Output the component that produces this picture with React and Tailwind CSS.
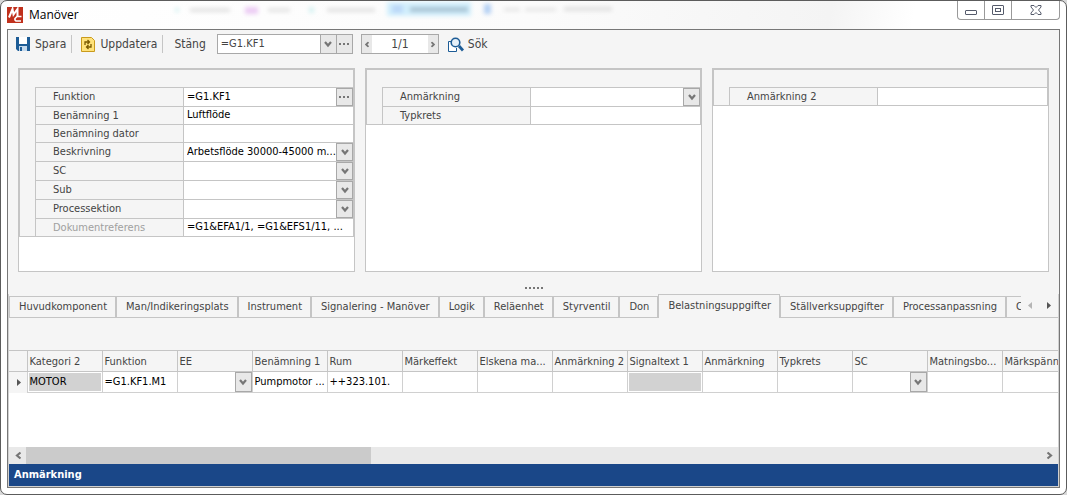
const FONT = "font-['DejaVu_Sans_Condensed','DejaVu_Sans',sans-serif]"

const panels = [
  {
    id: 'main',
    rows: [
      { label: 'Funktion', value: '=G1.KF1', control: 'more' },
      { label: 'Benämning 1', value: 'Luftflöde' },
      { label: 'Benämning dator', value: '' },
      { label: 'Beskrivning', value: 'Arbetsflöde 30000-45000 m...', control: 'select' },
      { label: 'SC', value: '', control: 'select' },
      { label: 'Sub', value: '', control: 'select' },
      { label: 'Processektion', value: '', control: 'select' },
      { label: 'Dokumentreferens', value: '=G1&EFA1/1, =G1&EFS1/11, ...', muted: true },
    ],
  },
  {
    id: 'note',
    rows: [
      { label: 'Anmärkning', value: '', control: 'select' },
      { label: 'Typkrets', value: '' },
    ],
  },
  { id: 'note2', rows: [{ label: 'Anmärkning 2', value: '' }] },
]

const tabs = [
  'Huvudkomponent',
  'Man/Indikeringsplats',
  'Instrument',
  'Signalering - Manöver',
  'Logik',
  'Reläenhet',
  'Styrventil',
  'Don',
  'Belastningsuppgifter',
  'Ställverksuppgifter',
  'Processanpassning',
  'C',
]

const columns = [
  { title: 'Kategori 2', value: 'MOTOR', locked: true },
  { title: 'Funktion', value: '=G1.KF1.M1' },
  { title: 'EE', select: true },
  { title: 'Benämning 1', value: 'Pumpmotor ...' },
  { title: 'Rum', value: '++323.101.' },
  { title: 'Märkeffekt' },
  { title: 'Elskena ma...' },
  { title: 'Anmärkning 2' },
  { title: 'Signaltext 1', locked: true },
  { title: 'Anmärkning' },
  { title: 'Typkrets' },
  { title: 'SC', select: true },
  { title: 'Matningsbo...' },
  { title: 'Märkspänni' },
]

function Chevron({ className = '' }) {
  return (
    <svg width="8" height="7" viewBox="0 0 8 7" className={className} aria-hidden="true">
      <path d="M1 1 4 4.5 7 1" fill="none" stroke="#767676" strokeWidth="2.2" />
    </svg>
  )
}

function SmallChevron({ className = '' }) {
  return (
    <svg width="6" height="5" viewBox="0 0 6 5" className={className} aria-hidden="true">
      <path d="M.7 1 3 3.4 5.300 1" fill="none" stroke="#767676" strokeWidth="1.8" />
    </svg>
  )
}

function Dots() {
  return (
    <svg width="11" height="2" viewBox="0 0 11 2" aria-hidden="true">
      <path d="M0 0h2v2H0zM4 0h2v2H4zM8 0h2v2H8z" fill="#767676" />
    </svg>
  )
}

function SelectBox({ id, label, value = '', className = '' }) {
  return (
    <div className="relative flex h-full w-full min-w-0">
      <select
        id={id}
        aria-label={label}
        defaultValue={value}
        className={`h-full w-full appearance-none truncate bg-white pr-4 outline-none ${className}`}
      >
        <option value={value}>{value}</option>
      </select>
      <span className="pointer-events-none absolute inset-y-0 right-0 flex w-[17px] items-center justify-center border border-[#a8a8a8] bg-[#e8e8e8]">
        <Chevron />
      </span>
    </div>
  )
}

function PropertyRow({ panelId, row }) {
  const id = `${panelId}-${row.label}`
  return (
    <div className={`flex border-t border-l border-[#c5c5c5] ${row.control ? 'h-[19px]' : 'h-[18px]'}`}>
      <label
        htmlFor={id}
        className={`w-[148px] shrink-0 border-r border-[#c5c5c5] pl-[17px] leading-[18px] ${row.muted ? 'text-[#a0a0a0]' : 'text-[#444]'}`}
      >
        {row.label}
      </label>
      {row.control === 'select' ? (
        <SelectBox id={id} value={row.value} className="pl-[3px] text-black" />
      ) : (
        <input id={id} defaultValue={row.value} className="w-full min-w-0 bg-white pl-[3px] text-black outline-none" />
      )}
      {row.control === 'more' && (
        <button aria-label="Välj funktion" className="flex w-[17px] shrink-0 items-center justify-center border border-[#a8a8a8] bg-[#e8e8e8]">
          <Dots />
        </button>
      )}
    </div>
  )
}

function Panel({ panel }) {
  return (
    <section className="h-[204px] border border-[#c5c5c5] bg-white">
      <div className="border border-[#c5c5c5] bg-[#f5f5f5] pt-[17px] pl-[15px]">
        {panel.rows.map((row) => (
          <PropertyRow key={row.label} panelId={panel.id} row={row} />
        ))}
      </div>
    </section>
  )
}

// Blurred shapes of the window behind, seen through the glass title bar
function GlassBackdrop() {
  return (
    <svg className="pointer-events-none absolute top-0 left-0" width="720" height="28" aria-hidden="true">
      <defs>
        <filter id="glass" x="-20%" y="-100%" width="140%" height="300%">
          <feGaussianBlur stdDeviation="2" />
        </filter>
      </defs>
      <g filter="url(#glass)">
        <rect x="168" y="7" width="4" height="4" fill="#d5f2f2" />
        <rect x="183" y="7" width="40" height="4" fill="#e2e2e2" />
        <rect x="238" y="6" width="13" height="7" fill="#ecccf4" />
        <rect x="261" y="7" width="22" height="4" fill="#e4e4e4" />
        <rect x="302" y="6" width="5" height="6" fill="#d5f2f2" />
        <rect x="320" y="7" width="48" height="4" fill="#e2e2e2" />
        <rect x="380" y="1" width="84" height="14" fill="#d2effd" />
        <rect x="385" y="4" width="11" height="8" fill="#bcd8f8" />
        <rect x="403" y="6" width="58" height="5" fill="#a8c3d3" />
        <rect x="477" y="3" width="7" height="10" fill="#b4d0f4" />
        <rect x="497" y="7" width="16" height="3" fill="#e2e2e2" />
        <rect x="518" y="7" width="31" height="3" fill="#e2e2e2" />
        <rect x="557" y="6" width="48" height="4" fill="#e0e0e0" />
      </g>
    </svg>
  )
}

function TitleBar() {
  return (
    <header className="relative flex h-[28px] shrink-0 justify-between bg-[linear-gradient(100deg,#fff_0%,#fbfbfb_50%,#f4f4f4_78%,#fff_86%)]">
      <GlassBackdrop />
      <div className="flex items-center gap-[6px]">
        <svg width="16" height="16" viewBox="0 0 16 16" aria-hidden="true">
          <rect width="16" height="16" fill="#c0301c" />
          <path d="M2 10.500 5.500 2 6.500 7.500 10.500 2v7.500" fill="none" stroke="#fff" strokeWidth="2" />
          <path d="M14.500 9.500H10L8 11.500V13l1 1h5" fill="none" stroke="#fff" strokeWidth="1.700" />
        </svg>
        <h1 className="font-['Open_Sans',sans-serif] text-[12px] text-black">Manöver</h1>
      </div>
      <div className="flex h-[19px] overflow-hidden rounded-b-[4px] border border-t-0 border-[#999] bg-white">
        <button aria-label="Minimera" className="flex w-[27px] items-center justify-center border-r border-[#999]">
          <svg width="12" height="12" viewBox="0 0 12 12">
            <rect x="0.500" y="6.500" width="11" height="4" rx="0.500" fill="#fff" stroke="#555b6b" />
          </svg>
        </button>
        <button aria-label="Maximera" className="flex w-[27px] items-center justify-center border-r border-[#999]">
          <svg width="12" height="10" viewBox="0 0 12 10">
            <rect x="0.500" y="0.500" width="11" height="9" rx="0.500" fill="#fff" stroke="#555b6b" />
            <rect x="3.500" y="3.500" width="5" height="3" fill="#fff" stroke="#555b6b" />
          </svg>
        </button>
        <button aria-label="Stäng fönster" className="flex w-[47px] items-center justify-center">
          <svg width="12" height="10" viewBox="0 0 12 10">
            <path
              d="M1 .5h3L6 2.500 8 .5h3v1.500L8.500 5 11 8v1.500H8L6 7.500 4 9.500H1V8l2.500-3L1 2z"
              fill="#fff"
              stroke="#555b6b"
            />
          </svg>
        </button>
      </div>
    </header>
  )
}

function Toolbar() {
  return (
    <div className="flex h-[28px] shrink-0 items-center pl-2 text-[12px] text-[#444]">
      <button className="flex items-center gap-[5px]">
        <svg width="14" height="14" viewBox="0 0 14 14" aria-hidden="true">
          <path d="M0 0h14v14H2L0 12z" fill="#1d5c96" />
          <path d="M3 0h8v7H3z" fill="#fff" />
          <path d="M3 9h8v5H3z" fill="#c5d9ec" />
          <path d="M4 10h2v4H4z" fill="#1d5c96" />
        </svg>
        Spara
      </button>
      <span className="mr-[9px] ml-[5px] h-[18px] w-px bg-[#c5c5c5]" />
      <button className="flex items-center gap-[5px]">
        <svg width="14" height="15" viewBox="0 0 14 15" aria-hidden="true">
          <path d="M.5.500h10l3 3v11H.5z" fill="#ffe27a" stroke="#c99a1c" />
          <path d="M4 8V5h4M6.500 3 8.500 5l-2 2M10 7v3H6M7.500 8l-2 2 2 2" fill="none" stroke="#7a5a00" strokeWidth="1.300" />
        </svg>
        Uppdatera
      </button>
      <span className="mr-[9px] ml-[5px] h-[18px] w-px bg-[#c5c5c5]" />
      <button className="px-[2px]">Stäng</button>
      <div className="ml-[9px] flex h-5 w-[136px] border border-[#a8a8a8] bg-white text-[11px]">
        <input aria-label="Objekt" defaultValue="=G1.KF1" className="w-full min-w-0 pl-[3px] outline-none" />
        <button aria-label="Visa lista" className="flex w-4 shrink-0 items-center justify-center border-l border-[#a8a8a8] bg-[#e8e8e8]">
          <Chevron />
        </button>
        <button aria-label="Bläddra" className="flex w-4 shrink-0 items-center justify-center border-l border-[#a8a8a8] bg-[#e8e8e8]">
          <Dots />
        </button>
      </div>
      <div className="ml-2 flex h-5 w-[78px] border border-[#a8a8a8] bg-white text-[11px]">
        <button aria-label="Föregående" className="flex w-[10px] shrink-0 items-center justify-center bg-[#e8e8e8]">
          <SmallChevron className="rotate-90" />
        </button>
        <input aria-label="Sida" defaultValue="1/1" className="w-full min-w-0 text-center text-[12px] outline-none" />
        <button aria-label="Nästa" className="flex w-[10px] shrink-0 items-center justify-center bg-[#e8e8e8]">
          <SmallChevron className="-rotate-90" />
        </button>
      </div>
      <button className="ml-[9px] flex items-center gap-1">
        <svg width="16" height="15" viewBox="0 0 16 15" aria-hidden="true">
          <path d="M3 4.500H.5v10h8V11" fill="#fff" stroke="#1d5c96" />
          <circle cx="7.500" cy="5.500" r="4.300" fill="#e6f0f8" stroke="#1d5c96" strokeWidth="1.600" />
          <path d="m11 9 4 4.500" stroke="#1d5c96" strokeWidth="2.800" />
        </svg>
        Sök
      </button>
    </div>
  )
}

function TabStrip() {
  return (
    <div className="flex h-6 shrink-0 text-[#444]">
      <div role="tablist" className="flex min-w-0 flex-1 overflow-hidden">
        {tabs.map((tab) =>
          tab === 'Belastningsuppgifter' ? (
            <button
              key={tab}
              role="tab"
              aria-selected="true"
              className="shrink-0 border border-b-0 border-[#c5c5c5] pr-2 pl-[9px] whitespace-nowrap"
            >
              {tab}
            </button>
          ) : (
            <button
              key={tab}
              role="tab"
              aria-selected="false"
              className="mt-[2px] shrink-0 border border-[#c5c5c5] pr-2 pl-[9px] whitespace-nowrap"
            >
              {tab}
            </button>
          ),
        )}
      </div>
      <div className="flex w-[37px] shrink-0 items-center justify-between border-b border-[#c5c5c5] px-[7px]">
        <button aria-label="Föregående flik">
          <svg width="4" height="7" viewBox="0 0 4 7">
            <path d="M4 0v7L0 3.500z" fill="#b5b5b5" />
          </svg>
        </button>
        <button aria-label="Nästa flik">
          <svg width="4" height="7" viewBox="0 0 4 7">
            <path d="M0 0v7l4-3.500z" fill="#555" />
          </svg>
        </button>
      </div>
    </div>
  )
}

function DataGrid() {
  return (
    <div className="flex-1 overflow-hidden bg-white">
      <div className="h-8 bg-[#f5f5f5]" />
      <table className="w-[1068px] table-fixed border-collapse">
        <thead>
          <tr className="h-[21px] bg-[#f5f5f5]">
            <th className="w-[18px] border border-l-0 border-[#c5c5c5]" />
            {columns.map((col) => (
              <th
                key={col.title}
                scope="col"
                className="w-[75px] overflow-hidden border border-[#c5c5c5] p-0 pt-px pl-[2px] text-left leading-[18px] font-normal whitespace-nowrap text-[#444]"
              >
                {col.title}
              </th>
            ))}
          </tr>
        </thead>
        <tbody>
          <tr className="h-[21px]">
            <td className="bg-[#f5f5f5] p-0 pl-2">
              <svg width="4" height="7" viewBox="0 0 4 7" aria-hidden="true">
                <path d="M0 0v7l4-3.500z" fill="#555" />
              </svg>
            </td>
            {columns.map((col) => (
              <td key={col.title} className="border border-[#d0d0d0] p-0 text-black">
                {col.select ? (
                  <div className="h-5">
                    <SelectBox label={col.title} />
                  </div>
                ) : (
                  <div className={`mx-px h-[18px] truncate pl-px leading-[18px] ${col.locked ? 'bg-[#d2d2d2]' : ''}`}>
                    {col.value}
                  </div>
                )}
              </td>
            ))}
          </tr>
        </tbody>
      </table>
    </div>
  )
}

export default function App() {
  return (
    <div className="bg-[#d8d8d8]">
      <div className={`flex min-h-screen flex-col rounded-[7px] border border-[#5c5c5c] bg-white px-[6px] pb-[6px] text-[11px] ${FONT}`}>
        <TitleBar />
        <main className="flex flex-1 flex-col border border-[#777] bg-[#f5f5f5]">
          <Toolbar />
          <div className="grid grid-cols-3 gap-[10px] px-[10px] pt-[10px]">
            {panels.map((panel) => (
              <Panel key={panel.id} panel={panel} />
            ))}
          </div>
          <div className="flex h-[22px] shrink-0 items-end justify-center pb-[5px]">
            <svg width="18" height="2" viewBox="0 0 18 2" aria-hidden="true">
              <path d="M0 0h2v2H0zM4 0h2v2H4zM8 0h2v2H8zM12 0h2v2h-2zM16 0h2v2h-2z" fill="#767676" />
            </svg>
          </div>
          <div className="flex flex-1 flex-col border-x border-b border-[#d0d0d0]">
            <TabStrip />
            <DataGrid />
            <div className="flex h-[17px] shrink-0 bg-[#e9e9e9]">
              <button aria-label="Rulla vänster" className="flex w-[17px] items-center justify-center">
                <Chevron className="rotate-90" />
              </button>
              <div className="flex-1">
                <div className="h-full w-[34%] bg-[#cbcbcb]" />
              </div>
              <button aria-label="Rulla höger" className="flex w-[17px] items-center justify-center">
                <Chevron className="-rotate-90" />
              </button>
            </div>
            <footer className="h-[22px] shrink-0 bg-[#1a4788] pl-[5px] leading-[22px] font-bold text-white">Anmärkning</footer>
          </div>
        </main>
      </div>
    </div>
  )
}
